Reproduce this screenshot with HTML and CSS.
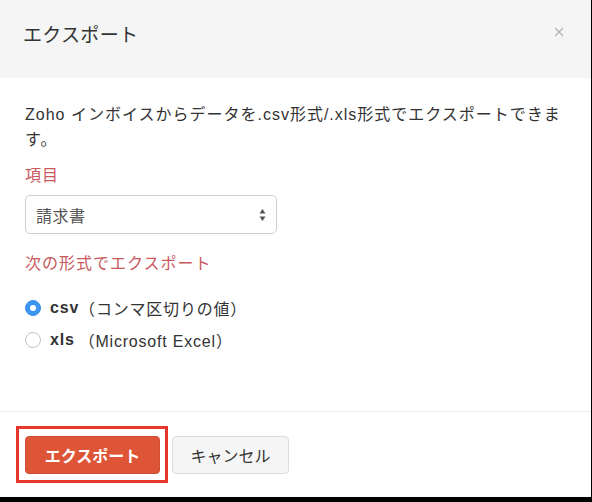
FILE: index.html
```html
<!DOCTYPE html>
<html lang="ja">
<head>
<meta charset="utf-8">
<link rel="stylesheet" href="styles.css">
</head>
<body>
<div class="modal">
  <div class="modal-header">
    <h1 class="title">エクスポート</h1>
    <svg class="close" width="10" height="10" viewBox="0 0 10 10"><path d="M1 1L9 9M9 1L1 9" stroke="#b5b5b5" stroke-width="1.4" fill="none"/></svg>
  </div>
  <div class="modal-body">
    <p class="desc">Zoho インボイスからデータを.csv形式/.xls形式でエクスポートできます。</p>
    <div class="label label-item">項目</div>
    <div class="select">
      <span>請求書</span>
      <svg class="arrows" width="7" height="14" viewBox="0 0 7 14"><path d="M3.5 1L6.5 5.5H0.5Z M3.5 13L6.5 8.5H0.5Z" fill="#555"/></svg>
    </div>
    <div class="label label-format">次の形式でエクスポート</div>
    <div class="radios">
      <div class="radio-row"><span class="radio checked"></span><b>csv</b><span>（コンマ区切りの値）</span></div>
      <div class="radio-row"><span class="radio"></span><b>xls</b><span class="sp">（Microsoft Excel）</span></div>
    </div>
  </div>
  <div class="modal-footer">
    <button class="btn btn-primary">エクスポート</button>
    <button class="btn btn-default">キャンセル</button>
  </div>
</div>
</body>
</html>
```
FILE: styles.css
```css
html, body {
  margin: 0;
  padding: 0;
  background: #000;
}
body {
  font-family: "Liberation Sans", "Noto Sans CJK JP", sans-serif;
  color: #333;
  font-size: 16px;
}
.modal {
  width: 591px;
  height: 497px;
  background: #fff;
  display: flex;
  flex-direction: column;
}
.modal-header {
  height: 78px;
  background: #f5f5f5;
  display: flex;
  align-items: center;
  justify-content: space-between;
  padding: 0 27px 8px 23px;
  box-sizing: border-box;
}
.title {
  margin: 0;
  font-size: 19px;
  font-weight: normal;
  color: #333;
  line-height: 1;
  letter-spacing: 0.3px;
}
.close {
  margin-top: -6px;
}
.modal-body {
  padding: 24px 25px 0 25px;
  flex: 1;
}
.desc {
  margin: 0;
  line-height: 25px;
  width: 541px;
  letter-spacing: 1px;
}
.label {
  color: #c9585d;
  line-height: 25px;
  letter-spacing: 1px;
}
.label-item {
  margin-top: 11px;
}
.select {
  margin-top: 7px;
  width: 252px;
  height: 39px;
  box-sizing: border-box;
  border: 1px solid #cfcfcf;
  border-radius: 5px;
  display: flex;
  align-items: center;
  justify-content: space-between;
  padding: 0 10px 0 10px;
  color: #555;
  letter-spacing: 0.5px;
}
.label-format {
  margin-top: 17px;
}
.radios {
  margin-top: 16px;
}
.radio-row {
  height: 32px;
  display: flex;
  align-items: center;
  letter-spacing: 0.8px;
}
.radio-row b {
  margin-left: 9px;
  font-weight: bold;
}
.radio-row .sp {
  margin-left: 4px;
}
.radio {
  width: 16px;
  height: 16px;
  box-sizing: border-box;
  border-radius: 50%;
  border: 1px solid #c2c2c2;
  background: #fff;
  display: flex;
  align-items: center;
  justify-content: center;
}
.radio.checked {
  background: #3d95f2;
  border-color: #3a8de6;
}
.radio.checked::after {
  content: "";
  width: 6px;
  height: 6px;
  border-radius: 50%;
  background: #fff;
}
.modal-footer {
  border-top: 1px solid #efefef;
  height: 86px;
  box-sizing: border-box;
  padding: 24px 25px 0 25px;
  display: flex;
  align-items: flex-start;
  gap: 12px;
}
.btn {
  height: 38px;
  font-family: "Liberation Sans", "Noto Sans CJK JP", sans-serif;
  font-size: 16px;
  border-radius: 4px;
  padding: 0;
  margin: 0;
}
.btn-primary {
  position: relative;
  width: 135px;
  background: #dd5437;
  border: 1px solid #d14e32;
  color: #fff;
  font-weight: bold;
}
.btn-primary::after {
  content: "";
  position: absolute;
  left: -10px;
  top: -11px;
  right: -9px;
  bottom: -10px;
  border: 3px solid #e8352b;
}
.btn-default {
  width: 117px;
  background: #f5f5f5;
  border: 1px solid #dcdcdc;
  color: #333;
}
```
